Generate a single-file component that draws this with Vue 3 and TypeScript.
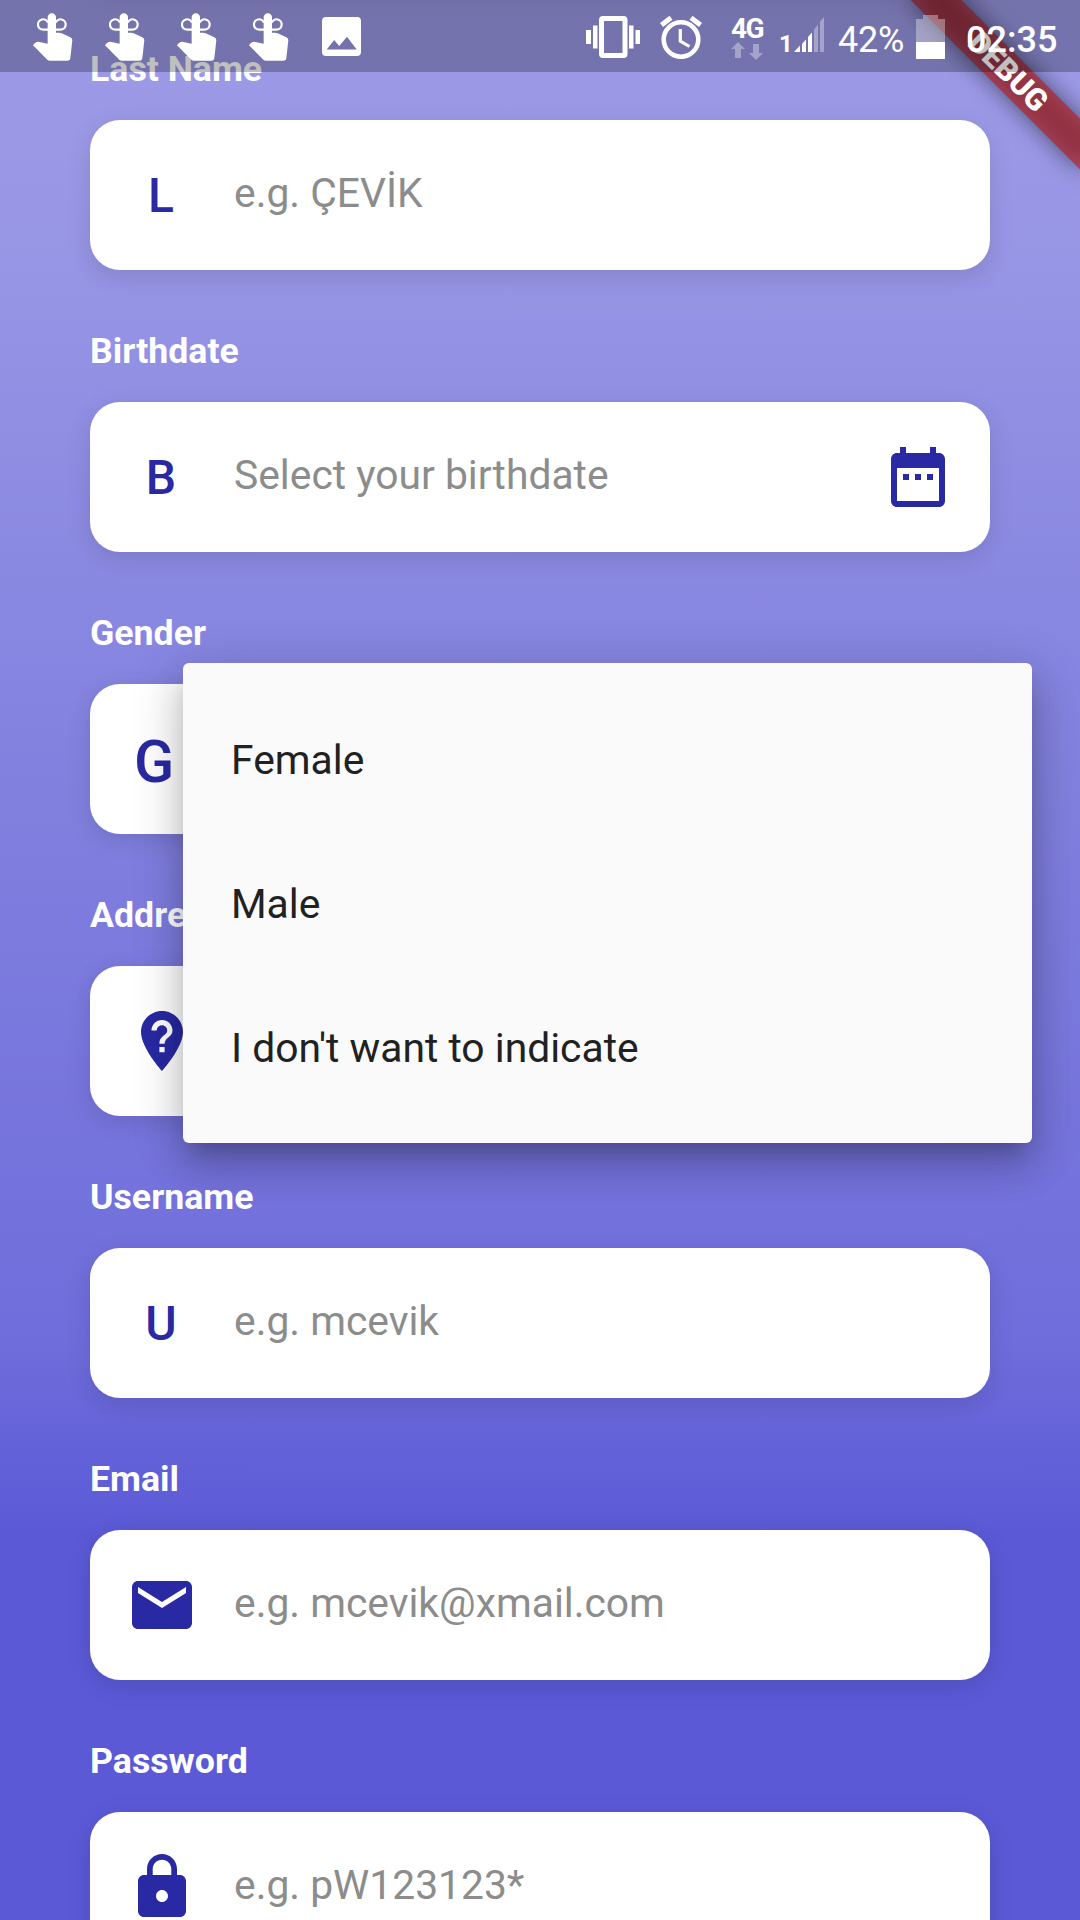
<script setup lang="ts">
interface Field {
  label: string
  hint?: string
  letter?: string
  large?: boolean
  icon?: string
  trailing?: string
}

const icons: Record<string, string> = {
  calendar:
    'M9 11H7v2h2v-2zm4 0h-2v2h2v-2zm4 0h-2v2h2v-2zm2-7h-1V2h-2v2H8V2H6v2H5c-1.11 0-1.99.9-1.99 2L3 20c0 1.1.89 2 2 2h14c1.1 0 2-.9 2-2V6c0-1.1-.9-2-2-2zm0 16H5V9h14v11z',
  place:
    'M12 2C8.14 2 5 5.14 5 9c0 5.25 7 13 7 13s7-7.75 7-13c0-3.86-3.14-7-7-7zm.88 13.75h-1.75V14h1.75v1.75zm0-2.87h-1.75c0-2.84 2.62-2.62 2.62-4.38 0-.96-.79-1.75-1.75-1.75s-1.75.79-1.75 1.75H8.5C8.5 6.57 10.07 5 12 5s3.5 1.57 3.5 3.5c0 2.19-2.62 2.41-2.62 4.38z',
  mail:
    'M20 4H4c-1.1 0-1.99.9-1.99 2L2 18c0 1.1.9 2 2 2h16c1.1 0 2-.9 2-2V6c0-1.1-.9-2-2-2zm0 4l-8 5-8-5V6l8 5 8-5v2z',
  lock:
    'M18 8h-1V6c0-2.76-2.24-5-5-5S7 3.24 7 6v2H6c-1.1 0-2 .9-2 2v10c0 1.1.9 2 2 2h12c1.1 0 2-.9 2-2V10c0-1.1-.9-2-2-2zm-6 9c-1.1 0-2-.9-2-2s.9-2 2-2 2 .9 2 2-.9 2-2 2zm3.1-9H8.900V6c0-1.71 1.390-3.100 3.100-3.100 1.710 0 3.100 1.390 3.100 3.100v2z',
}

const fields: Field[] = [
  { label: 'Last Name', hint: 'e.g. ÇEVİK', letter: 'L' },
  { label: 'Birthdate', hint: 'Select your birthdate', letter: 'B', trailing: 'calendar' },
  { label: 'Gender', letter: 'G', large: true },
  { label: 'Address', icon: 'place' },
  { label: 'Username', hint: 'e.g. mcevik', letter: 'U' },
  { label: 'Email', hint: 'e.g. mcevik@xmail.com', icon: 'mail' },
  { label: 'Password', hint: 'e.g. pW123123*', icon: 'lock' },
]

const options: string[] = ['Female', 'Male', "I don't want to indicate"]
</script>

<template>
  <div class="screen">
    <div class="form">
      <div class="card"></div>
      <div v-for="f in fields" :key="f.label" class="field">
        <div class="label">{{ f.label }}</div>
        <div class="card">
          <svg v-if="f.icon" class="icon" viewBox="0 0 24 24"><path :d="icons[f.icon]" /></svg>
          <div v-else class="lead" :class="{ large: f.large }">{{ f.letter }}</div>
          <div class="hint">{{ f.hint }}</div>
          <svg v-if="f.trailing" class="icon" viewBox="0 0 24 24"><path :d="icons[f.trailing]" /></svg>
        </div>
      </div>
    </div>

    <div class="menu">
      <div v-for="o in options" :key="o" class="option">{{ o }}</div>
    </div>

    <div class="banner">
      <div class="banner-shadow"></div>
      <div class="banner-face">DEBUG</div>
    </div>

    <div class="status">
      <div class="notices">
        <svg v-for="n in 4" :key="n" class="finger" viewBox="96 36 126 150">
          <g fill="none" stroke="#fff" stroke-width="6.500">
            <path d="M146 89H130a15.500 15.500 0 1 1 14 -21" />
            <path d="M166 89H181a15.500 15.500 0 1 0 -14 -21" />
          </g>
          <path
            fill="#fff"
            d="M143 52a12.500 12.500 0 0 1 25 0V98H177Q181 98 185 100L211 112Q217 115 217 121L211 174Q210 182 202 182H150Q145 182 142 179L99 136Q105 125 115 125L143 131Z"
          />
        </svg>
        <svg class="picture" viewBox="0 0 39 39">
          <path
            fill="#fff"
            fill-rule="evenodd"
            d="M4 0H35a4 4 0 0 1 4 4V35a4 4 0 0 1-4 4H4a4 4 0 0 1-4-4V4a4 4 0 0 1 4-4ZM4.700 32.500H34.700L25 19.700L17.200 29L12.200 23Z"
          />
        </svg>
      </div>

      <svg class="vibrate" viewBox="0 0 54 42" fill="#fff">
        <rect x="0" y="14" width="5" height="14" />
        <rect x="7" y="9.500" width="4.500" height="23" />
        <rect x="43" y="9.500" width="4.500" height="23" />
        <rect x="49.500" y="14" width="4.500" height="14" />
        <path fill-rule="evenodd" d="M17 0H37.500a4 4 0 0 1 4 4V38a4 4 0 0 1-4 4H17a4 4 0 0 1-4-4V4a4 4 0 0 1 4-4ZM18 5V37H36.500V5Z" />
      </svg>
      <svg class="alarm" viewBox="0 0 42 43" fill="none" stroke="#fff">
        <circle cx="21" cy="23.500" r="17.300" stroke-width="4.600" />
        <path d="M20.300 13V25L29.500 30.500" stroke-width="3.200" />
        <path d="M1.500 9L11 1.800M31 1.800L40.500 9" stroke-width="5" />
      </svg>
      <div class="network">
        <span class="generation">4G</span>
        <svg class="arrows" viewBox="0 0 32 18" fill="#a4a3c9">
          <path d="M7 0L14 7H10V16H4V7H0Z" />
          <path d="M25 18L18 11H22V2H28V11H32Z" />
        </svg>
      </div>
      <span class="sim">1</span>
      <svg class="signal" viewBox="0 0 30 35">
        <path fill="#fff" d="M0 35L6 28.500V35ZM8 35V27L12 22.500V35ZM14 35V20L18 15.500V35Z" />
        <path fill="#a4a3c9" d="M20 35V12.500L24 7.500V35ZM26 35V4.500L30 0V35Z" />
      </svg>
      <span class="percent">42%</span>
      <svg class="battery" viewBox="0 0 29 44" fill="#fff">
        <path opacity=".35" d="M7 0H22V4H29V27H0V4H7Z" />
        <path d="M0 27H29V44H0Z" />
      </svg>
      <span class="clock">02:35</span>
    </div>
  </div>
</template>

<style>
body {
  margin: 0;
}
</style>

<style scoped>
.screen {
  position: relative;
  width: 1080px;
  height: 1920px;
  overflow: hidden;
  font-family: Roboto, 'Noto Sans', sans-serif;
  background: linear-gradient(180deg, #9c9ae6 0%, #9b99e6 8%, #8281df 40%, #6f6ddb 70%, #5b59d6 80%, #5b59d6 100%);
}
.form {
  display: flex;
  flex-direction: column;
  gap: 60px;
  padding: 0 90px;
  margin-top: -162px;
}
.field {
  display: flex;
  flex-direction: column;
  gap: 30px;
}
.label {
  height: 42px;
  line-height: 42px;
  font-size: 35.7px;
  font-weight: 700;
  color: #fff;
}
.card {
  box-sizing: border-box;
  flex: none;
  display: flex;
  align-items: center;
  height: 150px;
  padding: 0 36px;
  border-radius: 30px;
  background: #fff;
  box-shadow: 0 6px 24px rgba(0, 0, 0, 0.12);
}
.lead {
  box-sizing: border-box;
  width: 72px;
  padding-right: 2px;
  text-align: center;
  font-size: 48px;
  font-weight: 500;
  color: #2929a3;
}
.lead.large {
  padding: 4px 0 0 8px;
  text-align: left;
  font-size: 59px;
}
.icon {
  display: block;
  flex: none;
  width: 72px;
  height: 72px;
  fill: #2929a3;
}
.hint {
  flex: 1;
  margin-left: 36px;
  padding-bottom: 4px;
  font-size: 40.8px;
  line-height: 48px;
  color: #8c8c8c;
}
.menu {
  position: absolute;
  left: 183px;
  top: 663px;
  box-sizing: border-box;
  width: 849px;
  height: 480px;
  padding: 25px 48px 23px;
  border-radius: 6px;
  background: #fafafa;
  box-shadow:
    0 15px 20px -9px rgba(0, 0, 0, 0.2),
    0 24px 38px 3px rgba(0, 0, 0, 0.14),
    0 9px 51px 6px rgba(0, 0, 0, 0.12);
}
.option {
  height: 144px;
  line-height: 144px;
  font-size: 40.8px;
  color: #212121;
}
.banner {
  position: absolute;
  left: 888px;
  top: 54px;
  width: 240px;
  height: 36px;
  transform: rotate(45deg);
}
.banner-shadow {
  position: absolute;
  inset: 0;
  background: rgba(0, 0, 0, 0.5);
  filter: blur(12px);
}
.banner-face {
  position: relative;
  height: 36px;
  line-height: 36px;
  text-align: center;
  font-size: 30.6px;
  font-weight: 900;
  color: #fff;
  background: rgba(183, 28, 28, 0.627);
}
.status {
  position: absolute;
  inset: 0 0 auto 0;
  height: 72px;
  display: flex;
  align-items: flex-start;
  color: #fff;
  background: rgba(0, 0, 0, 0.25);
}
.status svg {
  display: block;
  flex: none;
}
.notices {
  display: flex;
  width: 554px;
  padding-left: 32px;
}
.finger {
  width: 42px;
  height: 50px;
  margin: 12px 30px 0 0;
}
.picture {
  width: 39px;
  height: 39px;
  margin: 17px 0 0 2px;
}
.vibrate {
  width: 54px;
  height: 42px;
  margin-top: 16px;
}
.alarm {
  width: 42px;
  height: 43px;
  margin: 16px 0 0 20px;
}
.network {
  display: flex;
  flex-direction: column;
  width: 32px;
  margin: 18px 0 0 29px;
}
.generation {
  height: 24px;
  line-height: 21px;
  font-size: 28px;
  font-weight: 700;
  letter-spacing: -1.5px;
}
.arrows {
  width: 32px;
  height: 18px;
}
.sim {
  width: 15px;
  margin: 35px 0 0 16px;
  line-height: 18px;
  font-size: 24px;
  font-weight: 700;
}
.signal {
  width: 30px;
  height: 35px;
  margin: 17px 0 0 0;
}
.percent {
  width: 78px;
  margin: 19px 0 0 14px;
  line-height: 42px;
  font-size: 36px;
  letter-spacing: -0.2px;
}
.battery {
  width: 29px;
  height: 44px;
  margin: 15px 0 0 0;
}
.clock {
  margin: 19px 0 0 21px;
  line-height: 42px;
  font-size: 36px;
  font-weight: 500;
}
</style>
